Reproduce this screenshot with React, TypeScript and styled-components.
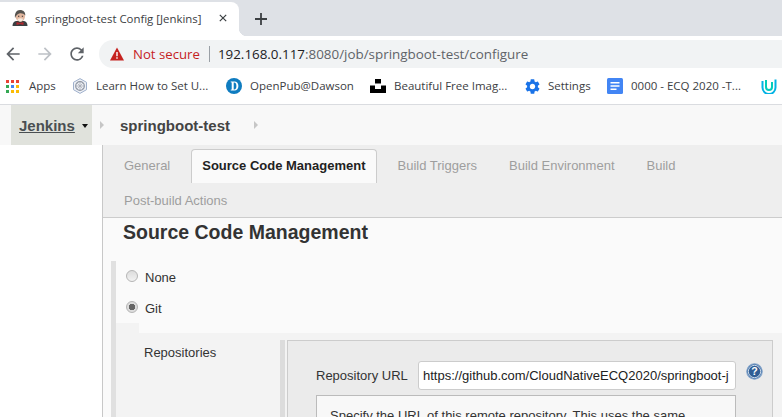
import styled, { createGlobalStyle } from 'styled-components'

const GlobalStyle = createGlobalStyle`
  html, body {
    margin: 0;
    height: 417px;
    overflow: hidden;
    background: #fff;
  }
`

const bookmarks = [
  { label: 'Apps', width: 27, gap: 16, icon: <AppsIcon /> },
  { label: 'Learn How to Set U...', width: 111, gap: 19, icon: <HexIcon /> },
  { label: 'OpenPub@Dawson', width: 103, gap: 17, icon: <DawsonIcon /> },
  { label: 'Beautiful Free Imag...', width: 111, gap: 20, icon: <UnsplashIcon /> },
  { label: 'Settings', width: 42, gap: 17, icon: <GearIcon /> },
  { label: '0000 - ECQ 2020 -T...', width: 112, gap: 18, icon: <DocIcon /> },
]

const tabs = ['General', 'Source Code Management', 'Build Triggers', 'Build Environment', 'Build', 'Post-build Actions']

const App = (): JSX.Element => {
  return (
    <Page>
      <GlobalStyle />
      <TabStrip>
        <BrowserTab>
          <ButlerIcon />
          <TabTitle>springboot-test Config [Jenkins]</TabTitle>
          <CloseIcon />
        </BrowserTab>
        <PlusIcon />
      </TabStrip>
      <Toolbar>
        <NavIcon $color="#5f6368">
          <path d="M20 11H7.830l5.590-5.590L12 4l-8 8 8 8 1.410-1.410L7.830 13H20v-2z" />
        </NavIcon>
        <NavIcon $color="#bdc1c6">
          <path d="M4 11h12.170l-5.590-5.590L12 4l8 8-8 8-1.410-1.410L16.170 13H4v-2z" />
        </NavIcon>
        <NavIcon $color="#5f6368">
          <path d="M17.650 6.350A7.958 7.958 0 0 0 12 4c-4.420 0-7.990 3.580-7.990 8s3.570 8 7.990 8c3.730 0 6.840-2.550 7.730-6h-2.080A5.990 5.990 0 0 1 12 18c-3.310 0-6-2.690-6-6s2.690-6 6-6c1.660 0 3.140.690 4.220 1.780L13 11h7V4l-2.350 2.350z" />
        </NavIcon>
        <Omnibox>
          <WarningIcon />
          <NotSecure>Not secure</NotSecure>
          <OmniDivider />
          <Url>
            192.168.0.117<UrlRest>:8080/job/springboot-test/configure</UrlRest>
          </Url>
        </Omnibox>
      </Toolbar>
      <BookmarkBar>
        {bookmarks.map(({ label, width, gap, icon }) => (
          <Bookmark key={label} $gap={gap}>
            {icon}
            <BookmarkLabel $width={width}>{label}</BookmarkLabel>
          </Bookmark>
        ))}
        <UdacityIcon />
      </BookmarkBar>
      <Header>
        <LogoButton>
          <LogoLink>Jenkins</LogoLink>
          <Caret />
        </LogoButton>
        <Chevron />
        <JobName>springboot-test</JobName>
        <Chevron />
      </Header>
      <Body>
        <Sidebar />
        <Main>
          <TabBar>
            {tabs.map(tab => (
              <ConfigTab key={tab} $active={tab === 'Source Code Management'}>
                {tab}
              </ConfigTab>
            ))}
          </TabBar>
          <Heading>Source Code Management</Heading>
          <Section>
            <RadioRow>
              <Radio />
              <RadioLabel>None</RadioLabel>
            </RadioRow>
            <RadioRow>
              <Radio $checked />
              <RadioLabel>Git</RadioLabel>
            </RadioRow>
            <Notch />
            <GitBlock>
              <GitLabel>Repositories</GitLabel>
              <RepoColumn>
                <RepoBox>
                  <RepoRow>
                    <FieldLabel>Repository URL</FieldLabel>
                    <UrlField>https://github.com/CloudNativeECQ2020/springboot-j</UrlField>
                    <HelpIcon />
                  </RepoRow>
                  <HelpBox>Specify the URL of this remote repository. This uses the same</HelpBox>
                </RepoBox>
              </RepoColumn>
            </GitBlock>
          </Section>
        </Main>
      </Body>
    </Page>
  )
}

function ButlerIcon() {
  return (
    <FaviconSvg viewBox="0 0 16 16" $size={16}>
      <path d="M.5 16c0-3 1.500-4.500 3.500-5h8c2 .5 3.500 2 3.500 5z" fill="#3b3f42" />
      <path d="M3.500 6c0-3.500 2-5.500 4.800-5.500S13 2.500 13 6c0 3.200-2 5.800-4.600 5.800S3.500 9.200 3.500 6z" fill="#e2b79f" />
      <path d="M3 8C2.300 3.500 4.500 0 8 0c3.300 0 5.500 2.200 5.300 5.500C11.800 3.800 9.500 3 7.300 3.500 5.500 4 4 5.500 3 8z" fill="#55534f" />
      <path d="M6 5.800h1.300v1H6zM9.800 5.800h1.300v1H9.800z" fill="#333" />
      <path d="M5.500 8.800c1.500-.8 4-.8 5.500 0-.4 1.800-1.500 2.600-2.700 2.600S5.900 10.600 5.500 8.800z" fill="#f5ebe0" />
      <path d="M4.500 12L8 13l3.500-1v3L8 14l-3.500 1z" fill="#b5272d" />
    </FaviconSvg>
  )
}

function AppsIcon() {
  const colors = ['#ea4335', '#ea4335', '#ea4335', '#34a853', '#4285f4', '#fbbc05', '#34a853', '#fbbc05', '#fbbc05']
  return (
    <FaviconSvg viewBox="0 0 15 15" $size={15}>
      {colors.map((color, i) => (
        <rect key={i} x={(i % 3) * 5} y={1 + Math.floor(i / 3) * 5} width="3" height="3" fill={color} />
      ))}
    </FaviconSvg>
  )
}

function HexIcon() {
  return (
    <FaviconSvg viewBox="0 0 16 16" $size={16}>
      <path d="M8 .6l6.500 3.700v7.400L8 15.400l-6.500-3.700V4.300z" fill="#eef1f6" stroke="#9fb0cc" />
      <circle cx="8" cy="8" r="4.300" fill="none" stroke="#8f96a3" strokeWidth="1.200" />
      <path d="M4 8h8M8 4v8M5.200 5.200l5.600 5.600M10.800 5.200l-5.600 5.600" stroke="#a3a8b2" strokeWidth=".7" />
    </FaviconSvg>
  )
}

function DawsonIcon() {
  return (
    <FaviconSvg viewBox="0 0 16 16" $size={16}>
      <circle cx="8" cy="8" r="8" fill="#0f7cc0" />
      <path d="M4.700 3.500h3.600c2.700 0 4.100 1.900 4.100 4.500s-1.400 4.500-4.100 4.500H4.700v-.8l1-.3V4.600l-1-.3zm3 1.100v6.800h.5c1.500 0 2.200-1.300 2.200-3.400s-.7-3.400-2.200-3.400z" fill="#fff" />
    </FaviconSvg>
  )
}

function UnsplashIcon() {
  return (
    <FaviconSvg viewBox="0 0 16 16" $size={16}>
      <path d="M5 1h6v4.500H5zM0 7.500h5V11h6V7.500h5V15H0z" fill="#000" />
    </FaviconSvg>
  )
}

function GearIcon() {
  return (
    <FaviconSvg viewBox="2 2 20 20" $size={15}>
      <path
        d="M19.140 12.940c.04-.3.060-.61.060-.94 0-.32-.020-.64-.070-.94l2.030-1.580a.49.49 0 0 0 .12-.61l-1.920-3.320a.488.488 0 0 0-.59-.22l-2.390.96c-.5-.38-1.030-.7-1.620-.94l-.36-2.540a.484.484 0 0 0-.48-.41h-3.840c-.24 0-.43.17-.47.41l-.36 2.540c-.59.24-1.130.57-1.620.94l-2.390-.96c-.22-.08-.47 0-.59.22L2.740 8.870c-.12.21-.08.47.12.61l2.030 1.580c-.05.3-.09.63-.09.94s.020.64.070.94l-2.030 1.580a.49.49 0 0 0-.12.61l1.920 3.320c.12.22.37.29.59.22l2.390-.96c.5.38 1.030.7 1.620.94l.36 2.540c.05.24.24.41.48.41h3.840c.24 0 .44-.17.47-.41l.36-2.540c.59-.24 1.130-.56 1.620-.94l2.390.96c.22.08.47 0 .59-.22l1.920-3.320c.12-.22.070-.47-.12-.61l-2.010-1.580zM12 15.600A3.610 3.610 0 0 1 8.400 12c0-1.980 1.620-3.600 3.600-3.600s3.600 1.620 3.600 3.600-1.620 3.600-3.600 3.600z"
        fill="#1a73e8"
      />
    </FaviconSvg>
  )
}

function DocIcon() {
  return (
    <FaviconSvg viewBox="0 0 16 16" $size={16}>
      <rect width="16" height="16" rx="1.500" fill="#4285f4" />
      <path d="M3.500 4h9v1.500h-9zM3.500 7.200h9v1.500h-9zM3.500 10.400h6v1.500h-6z" fill="#fff" />
    </FaviconSvg>
  )
}

function UdacityIcon() {
  return (
    <FaviconSvg viewBox="0 0 16 16" $size={16}>
      <path d="M1.500 3v6.500a6.500 6.500 0 0 0 13 0V1.500" fill="none" stroke="#02b3e4" strokeWidth="2" />
      <path d="M5 2v7a3 3 0 0 0 6 0V4" fill="none" stroke="#02ccba" strokeWidth="2" />
    </FaviconSvg>
  )
}

function CloseIcon() {
  return (
    <CloseSvg viewBox="0 0 10 10">
      <path d="M1 1l8 8M9 1l-8 8" stroke="#3c4043" strokeWidth="1.500" />
    </CloseSvg>
  )
}

function PlusIcon() {
  return (
    <PlusSvg viewBox="0 0 12 12">
      <path d="M6 0v12M0 6h12" stroke="#3c4043" strokeWidth="1.800" />
    </PlusSvg>
  )
}

function WarningIcon() {
  return (
    <FaviconSvg viewBox="0 0 14 13" $size={14}>
      <path d="M7 0l7 13H0z" fill="#c5221f" />
      <path d="M6.300 4.500h1.400v4.300H6.300zM6.300 9.800h1.400v1.400H6.300z" fill="#fff" />
    </FaviconSvg>
  )
}

function HelpIcon() {
  return (
    <HelpSvg viewBox="0 0 16 16">
      <circle cx="8" cy="8" r="7.300" fill="#3d6ea5" stroke="#8aa8cc" strokeWidth="1" />
      <circle cx="8" cy="8" r="5.800" fill="#2f5d94" stroke="#e6edf5" strokeWidth=".8" />
      <text x="8" y="11.600" textAnchor="middle" fontFamily="Liberation Sans, sans-serif" fontWeight="700" fontSize="10" fill="#fff">
        ?
      </text>
    </HelpSvg>
  )
}

const Page = styled.div`
  width: 782px;
  height: 417px;
  overflow: hidden;
  display: flex;
  flex-direction: column;
`

const TabStrip = styled.div`
  height: 36px;
  flex: none;
  background: #dee1e6;
  display: flex;
  align-items: flex-end;
`

const BrowserTab = styled.div`
  position: relative;
  width: 239px;
  height: 34px;
  box-sizing: border-box;
  padding: 0 12px 2px 12px;
  background: #fff;
  border-radius: 0 8px 0 0;
  display: flex;
  align-items: center;

  &::after {
    content: '';
    position: absolute;
    right: -8px;
    bottom: 0;
    width: 8px;
    height: 8px;
    background: radial-gradient(circle at 100% 0, transparent 8px, #fff 8.500px);
  }
`

const TabTitle = styled.span`
  margin-left: 7px;
  flex: 1;
  font: 11.400px 'Open Sans', sans-serif;
  color: #3c4043;
  white-space: nowrap;
`

const CloseSvg = styled.svg`
  width: 8px;
  height: 8px;
  flex: none;
`

const PlusSvg = styled.svg`
  width: 12px;
  height: 12px;
  margin: 0 0 11px 16px;
`

const Toolbar = styled.div`
  height: 28px;
  padding: 4px 0 0 3px;
  flex: none;
  display: flex;
  align-items: center;
  background: #fff;
`

const NavIcon = styled.svg.attrs({ viewBox: '0 0 24 24' })<{ $color: string }>`
  width: 20px;
  height: 20px;
  margin-right: 12px;
  fill: ${({ $color }) => $color};
`

const Omnibox = styled.div`
  flex: 1;
  height: 28px;
  box-sizing: border-box;
  padding-left: 11px;
  background: #f1f3f4;
  border-radius: 14px 0 0 14px;
  display: flex;
  align-items: center;
  font: 13.400px 'Open Sans', sans-serif;
`

const NotSecure = styled.span`
  margin-left: 9px;
  color: #c5221f;
  font-size: 13.200px;
`

const OmniDivider = styled.span`
  width: 1px;
  height: 16px;
  margin: 0 8px 0 9px;
  background: #9aa0a6;
`

const Url = styled.span`
  color: #202124;
  white-space: nowrap;
`

const UrlRest = styled.span`
  color: #5f6368;
`

const BookmarkBar = styled.div`
  height: 37px;
  flex: none;
  box-sizing: border-box;
  padding-left: 6px;
  background: #fff;
  border-bottom: 1px solid #dadce0;
  display: flex;
  align-items: center;
`

const Bookmark = styled.div<{ $gap: number }>`
  display: flex;
  align-items: center;
  gap: 8px;
  margin-right: ${({ $gap }) => $gap}px;
`

const BookmarkLabel = styled.span<{ $width: number }>`
  width: ${({ $width }) => $width}px;
  margin-bottom: 2px;
  font: 11.500px 'Open Sans', sans-serif;
  color: #3c4043;
  white-space: nowrap;
`

const FaviconSvg = styled.svg<{ $size: number }>`
  width: ${({ $size }) => $size}px;
  height: ${({ $size }) => $size}px;
  flex: none;
`

const Header = styled.div`
  height: 40px;
  flex: none;
  box-sizing: border-box;
  padding-left: 11px;
  background: #f8f8f8;
  display: flex;
  align-items: center;
  font: bold 15px 'Liberation Sans', Arial, sans-serif;
`

const LogoButton = styled.div`
  width: 81px;
  height: 40px;
  box-sizing: border-box;
  padding-left: 8px;
  background: #e0e2dc;
  display: flex;
  align-items: center;
`

const LogoLink = styled.span`
  color: #4a4f52;
  text-decoration: underline;
`

const Caret = styled.span`
  margin: 1px 0 0 7px;
  border-top: 4px solid #111;
  border-left: 3.500px solid transparent;
  border-right: 3.500px solid transparent;
`

const Chevron = styled.span`
  margin-left: 8px;
  border-left: 4px solid #c6c6c6;
  border-top: 4px solid transparent;
  border-bottom: 4px solid transparent;
`

const JobName = styled.span`
  margin: 0 16px 0 16px;
  color: #444;
`

const Body = styled.div`
  flex: 1;
  display: flex;
  min-height: 0;
`

const Sidebar = styled.div`
  width: 102px;
  flex: none;
  background: #fff;
  border-right: 1px solid #c8c8c8;
`

const Main = styled.div`
  flex: 1;
  min-width: 0;
  background: #fafafa;
  font: 13px 'Liberation Sans', Arial, sans-serif;
`

const TabBar = styled.div`
  height: 73px;
  box-sizing: border-box;
  padding: 4px 0 0 10px;
  background: #eee;
  border-bottom: 1px solid #ccc;
  display: flex;
  flex-wrap: wrap;
  align-content: flex-start;
  column-gap: 10px;
`

const ConfigTab = styled.div<{ $active?: boolean }>`
  height: 34px;
  box-sizing: border-box;
  padding: 0 10px 2px;
  display: flex;
  align-items: center;
  white-space: nowrap;
  color: ${({ $active }) => ($active ? '#222' : '#9e9e9e')};
  font-weight: ${({ $active }) => ($active ? 700 : 400)};
  background: ${({ $active }) => ($active ? '#fafafa' : 'transparent')};
  border: 1px solid ${({ $active }) => ($active ? '#ccc' : 'transparent')};
  border-bottom: 0;
  border-radius: 4px 4px 0 0;

  &:last-child {
    padding-bottom: 0;
  }
`

const Heading = styled.h2`
  margin: 0 0 0 20px;
  height: 43px;
  font-size: 19.500px;
  line-height: 28px;
  font-weight: 700;
  color: #333;
`

const Section = styled.div`
  margin-left: 8px;
  border-left: 5px solid #e0e0e0;
`

const RadioRow = styled.div`
  height: 31px;
  padding-left: 10px;
  display: flex;
  align-items: center;
  gap: 7px;
`

const Radio = styled.span<{ $checked?: boolean }>`
  width: 12px;
  height: 12px;
  margin-top: -2px;
  box-sizing: border-box;
  border-radius: 50%;
  border: 1px solid #b5b5b5;
  background: ${({ $checked }) =>
    $checked ? 'radial-gradient(circle, #666 0 3px, #ddd 3.500px)' : 'linear-gradient(#dcdcdc, #f2f2f2)'};
`

const RadioLabel = styled.span`
  margin-top: 2px;
  color: #333;
`

const Notch = styled.div`
  width: 23px;
  height: 10px;
  background: #f3f3f3;
`

const GitBlock = styled.div`
  display: flex;
  height: 200px;
  background: #f3f3f3;
`

const GitLabel = styled.div`
  width: 136px;
  padding: 12px 0 0 28px;
  color: #333;
`

const RepoColumn = styled.div`
  flex: 1;
  margin: 7px 9px 0 0;
  padding-left: 2px;
  border-left: 5px solid #dcdcdc;
`

const RepoBox = styled.div`
  height: 100%;
  box-sizing: border-box;
  padding: 20px 0 0 28px;
  background: #ebebeb;
  border: 1px solid #ccc;
`

const RepoRow = styled.div`
  display: flex;
  align-items: center;
`

const FieldLabel = styled.div`
  width: 102px;
  flex: none;
  color: #333;
`

const UrlField = styled.div`
  width: 318px;
  height: 29px;
  flex: none;
  box-sizing: border-box;
  padding: 0 4px;
  background: #fff;
  border: 1px solid #ccc;
  border-radius: 3px;
  line-height: 27px;
  color: #222;
  white-space: nowrap;
  overflow: hidden;
`

const HelpSvg = styled.svg`
  width: 17px;
  height: 17px;
  margin: 2px 0 0 10px;
  align-self: flex-start;
  flex: none;
`

const HelpBox = styled.div`
  width: 420px;
  height: 80px;
  margin-top: 5px;
  box-sizing: border-box;
  padding: 12px 13px;
  background: #f8f8f8;
  border: 1px solid #bbb;
  color: #333;
  white-space: nowrap;
`

export default App
